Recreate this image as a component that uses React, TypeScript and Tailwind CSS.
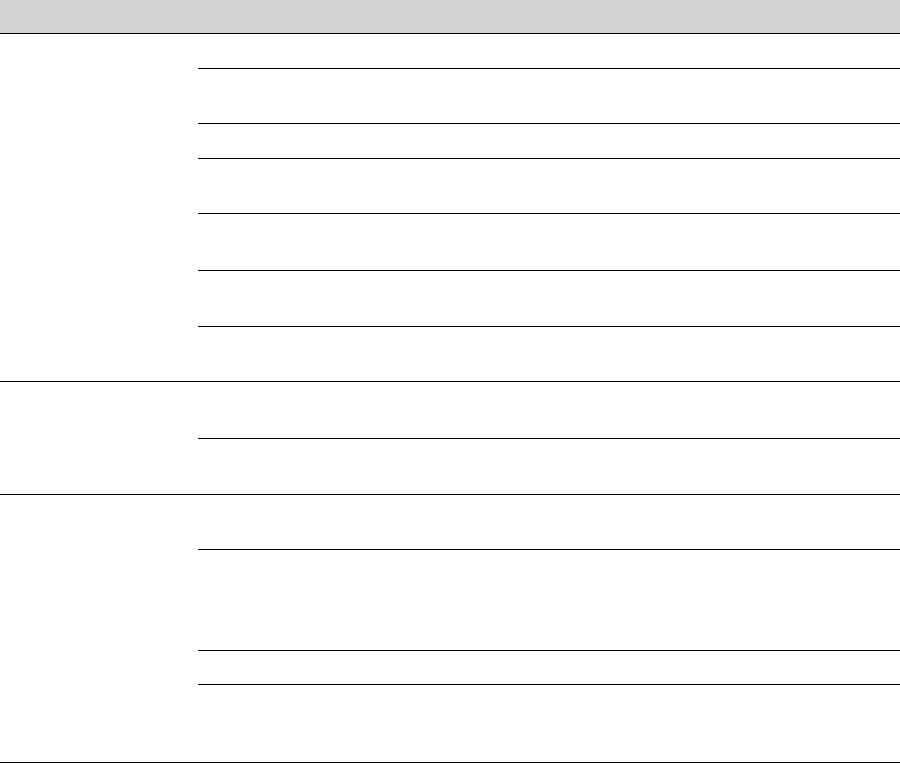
import React from "react";

const groups: number[][] = [
  [35, 55, 35, 55, 57, 56, 54],
  [57, 55],
  [55, 101, 34, 77],
];

export default function App() {
  return (
    <div className="w-[900px] h-[763px] bg-white" style={{ fontFamily: '"Liberation Sans", Arial, sans-serif' }}>
      <div className="h-[34px] bg-[#d3d3d3] border-b border-black" />
      {groups.map((rows, gi) => (
        <div key={gi} className="flex border-b border-black">
          <div className="w-[198px] shrink-0" />
          <div className="flex-1 flex flex-col">
            {rows.map((h, ri) => (
              <div
                key={ri}
                className={ri < rows.length - 1 ? "border-b border-black" : ""}
                style={{ height: h }}
              />
            ))}
          </div>
        </div>
      ))}
    </div>
  );
}
